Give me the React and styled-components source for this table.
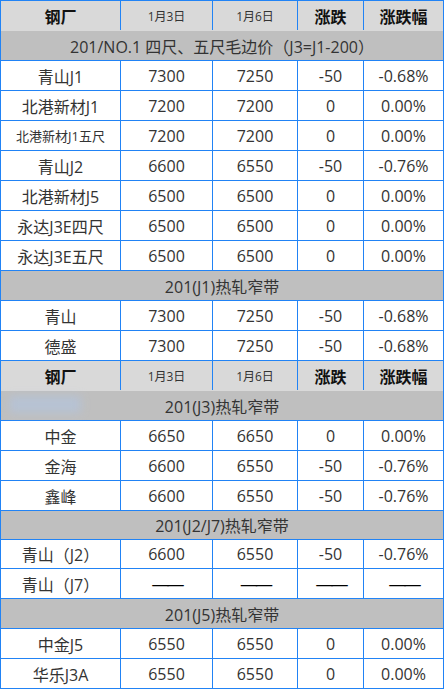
import React from 'react';
import styled, { createGlobalStyle } from "styled-components";

const GlobalStyle = createGlobalStyle`
  body {
    margin: 0;
    background: #fff;
    font-family: "Open Sans", "Noto Sans CJK SC", sans-serif;
  }
`;

const BLUE = "#2183f5";

const Table = styled.div`
  width: 444px;
  box-sizing: border-box;
  border-top: 1px solid ${BLUE};
  border-left: 1px solid ${BLUE};
  border-right: 1px solid ${BLUE};
  color: #333;
`;

const Row = styled.div`
  display: grid;
  grid-template-columns: 119px 92px 85px 66px 1fr;
  height: ${(p) => p.$h || 30}px;
  box-sizing: border-box;
  border-bottom: 1px solid ${BLUE};
  background: #fff;
`;

const HeadRow = styled(Row)`
  background: #d9d9d9;
  border-bottom-color: #d9d9d9;
`;

const GroupRow = styled.div`
  position: relative;
  height: ${(p) => p.$h || 30}px;
  box-sizing: border-box;
  border-bottom: 1px solid ${BLUE};
  background: #bfbfbf;
  display: flex;
  align-items: center;
  justify-content: center;
  font-size: 16px;
  color: #333;
`;

const Cell = styled.div`
  display: flex;
  align-items: center;
  justify-content: center;
  font-size: ${(p) => p.$size || 16}px;
  color: ${(p) => (p.$dash ? "#000" : "#333")};
  letter-spacing: ${(p) => (p.$dash ? "-3px" : "normal")};
  white-space: nowrap;
  & + & {
    border-left: 1px solid ${BLUE};
  }
`;

const HeadCell = styled(Cell)`
  font-weight: ${(p) => (p.$small ? 400 : 700)};
  font-size: ${(p) => (p.$small ? 12 : 16)}px;
  color: ${(p) => (p.$small ? "#333" : "#111")};
`;

// blurred mark over the left of one section title
const Smudge = styled.div`
  position: absolute;
  left: 8px;
  top: 5px;
  width: 72px;
  height: 17px;
  background: #b3c4dd;
  filter: blur(4px);
  opacity: 0.7;
`;

const Header = () => (
  <HeadRow>
    <HeadCell>钢厂</HeadCell>
    <HeadCell $small>1月3日</HeadCell>
    <HeadCell $small>1月6日</HeadCell>
    <HeadCell>涨跌</HeadCell>
    <HeadCell>涨跌幅</HeadCell>
  </HeadRow>
);

const DASH = "——";

const rows = [
  { type: "head" },
  { type: "group", text: "201/NO.1 四尺、五尺毛边价（J3=J1-200）" },
  { cells: ["青山J1", "7300", "7250", "-50", "-0.68%"] },
  { cells: ["北港新材J1", "7200", "7200", "0", "0.00%"] },
  { cells: ["北港新材J1五尺", "7200", "7200", "0", "0.00%"], small: true },
  { cells: ["青山J2", "6600", "6550", "-50", "-0.76%"] },
  { cells: ["北港新材J5", "6500", "6500", "0", "0.00%"] },
  { cells: ["永达J3E四尺", "6500", "6500", "0", "0.00%"] },
  { cells: ["永达J3E五尺", "6500", "6500", "0", "0.00%"] },
  { type: "group", text: "201(J1)热轧窄带" },
  { cells: ["青山", "7300", "7250", "-50", "-0.68%"] },
  { cells: ["德盛", "7300", "7250", "-50", "-0.68%"] },
  { type: "head" },
  { type: "group", text: "201(J3)热轧窄带", smudge: true },
  { cells: ["中金", "6650", "6650", "0", "0.00%"] },
  { cells: ["金海", "6600", "6550", "-50", "-0.76%"] },
  { cells: ["鑫峰", "6600", "6550", "-50", "-0.76%"] },
  { type: "group", text: "201(J2/J7)热轧窄带", h: 29 },
  { cells: ["青山（J2）", "6600", "6550", "-50", "-0.76%"], h: 29 },
  { cells: ["青山（J7）", DASH, DASH, DASH, DASH] },
  { type: "group", text: "201(J5)热轧窄带" },
  { cells: ["中金J5", "6550", "6550", "0", "0.00%"] },
  { cells: ["华乐J3A", "6550", "6550", "0", "0.00%"] },
];

const App = () => {
  return (
    <>
      <GlobalStyle />
      <Table>
        {rows.map((r, i) => {
          if (r.type === "head") return <Header key={i} />;
          if (r.type === "group")
            return (
              <GroupRow key={i} $h={r.h}>
                {r.smudge && <Smudge />}
                {r.text}
              </GroupRow>
            );
          return (
            <Row key={i} $h={r.h}>
              {r.cells.map((c, j) => (
                <Cell
                  key={j}
                  $dash={c === DASH}
                  $size={j === 0 && r.small ? 13 : c === DASH ? 18 : 16}
                >
                  {c}
                </Cell>
              ))}
            </Row>
          );
        })}
      </Table>
    </>
  );
};

export default App;
